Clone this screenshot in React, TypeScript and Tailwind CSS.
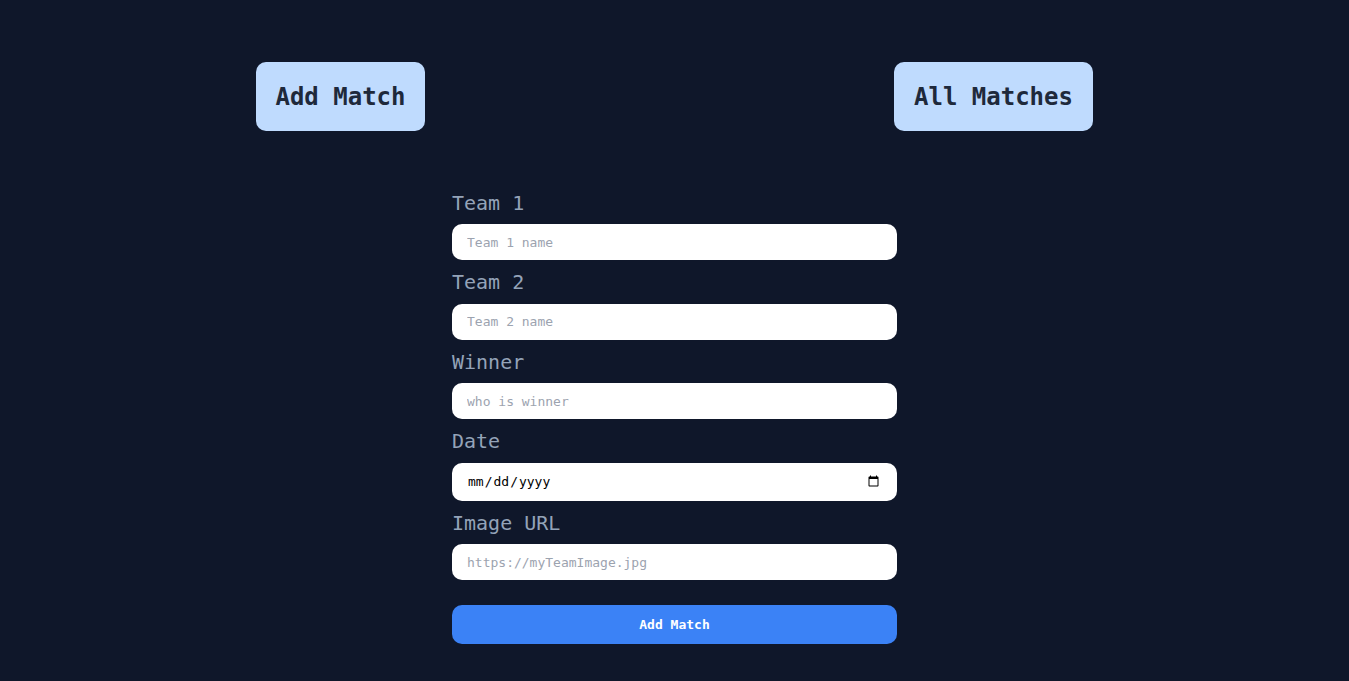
import { FC } from 'react';

const mono = { fontFamily: '"DejaVu Sans Mono", "Liberation Mono", monospace' };

const fields = [
  { label: 'Team 1', type: 'text', placeholder: 'Team 1 name' },
  { label: 'Team 2', type: 'text', placeholder: 'Team 2 name' },
  { label: 'Winner', type: 'text', placeholder: 'who is winner' },
  { label: 'Date', type: 'date', placeholder: '' },
  { label: 'Image URL', type: 'text', placeholder: 'https://myTeamImage.jpg' },
];

const App: FC = () => {
  return (
    <div className="min-h-[681px] w-full bg-[#0f172a]" style={mono}>
      {/* Top nav */}
      <nav className="mx-auto flex w-[837px] items-start justify-between pt-[62px]">
        <button className="h-[69px] w-[169px] rounded-[10px] bg-[#bfdbfe] text-2xl font-bold text-[#1e293b]">
          Add Match
        </button>
        <button className="h-[69px] w-[199px] rounded-[10px] bg-[#bfdbfe] text-2xl font-bold text-[#1e293b]">
          All Matches
        </button>
      </nav>

      {/* Form */}
      <form className="mx-auto mt-[49.5px] flex w-[445px] flex-col" onSubmit={(e) => e.preventDefault()}>
        {fields.map((f) => (
          <div key={f.label} className="flex flex-col">
            <label className="mt-2 mb-[7.5px] text-xl leading-7 text-[#94a3b8]">{f.label}</label>
            <input
              type={f.type}
              placeholder={f.placeholder}
              className={`w-full rounded-[10px] bg-white px-[15px] text-[13px] text-black outline-none placeholder:text-[#9ca3af] ${
                f.type === 'date' ? 'h-[38px]' : 'h-9'
              }`}
              style={mono}
            />
          </div>
        ))}
        <button
          type="submit"
          className="mt-[25px] h-[39px] w-full rounded-[10px] bg-[#3b82f6] text-[13px] font-bold text-white"
        >
          Add Match
        </button>
      </form>
    </div>
  );
};

export default App;
